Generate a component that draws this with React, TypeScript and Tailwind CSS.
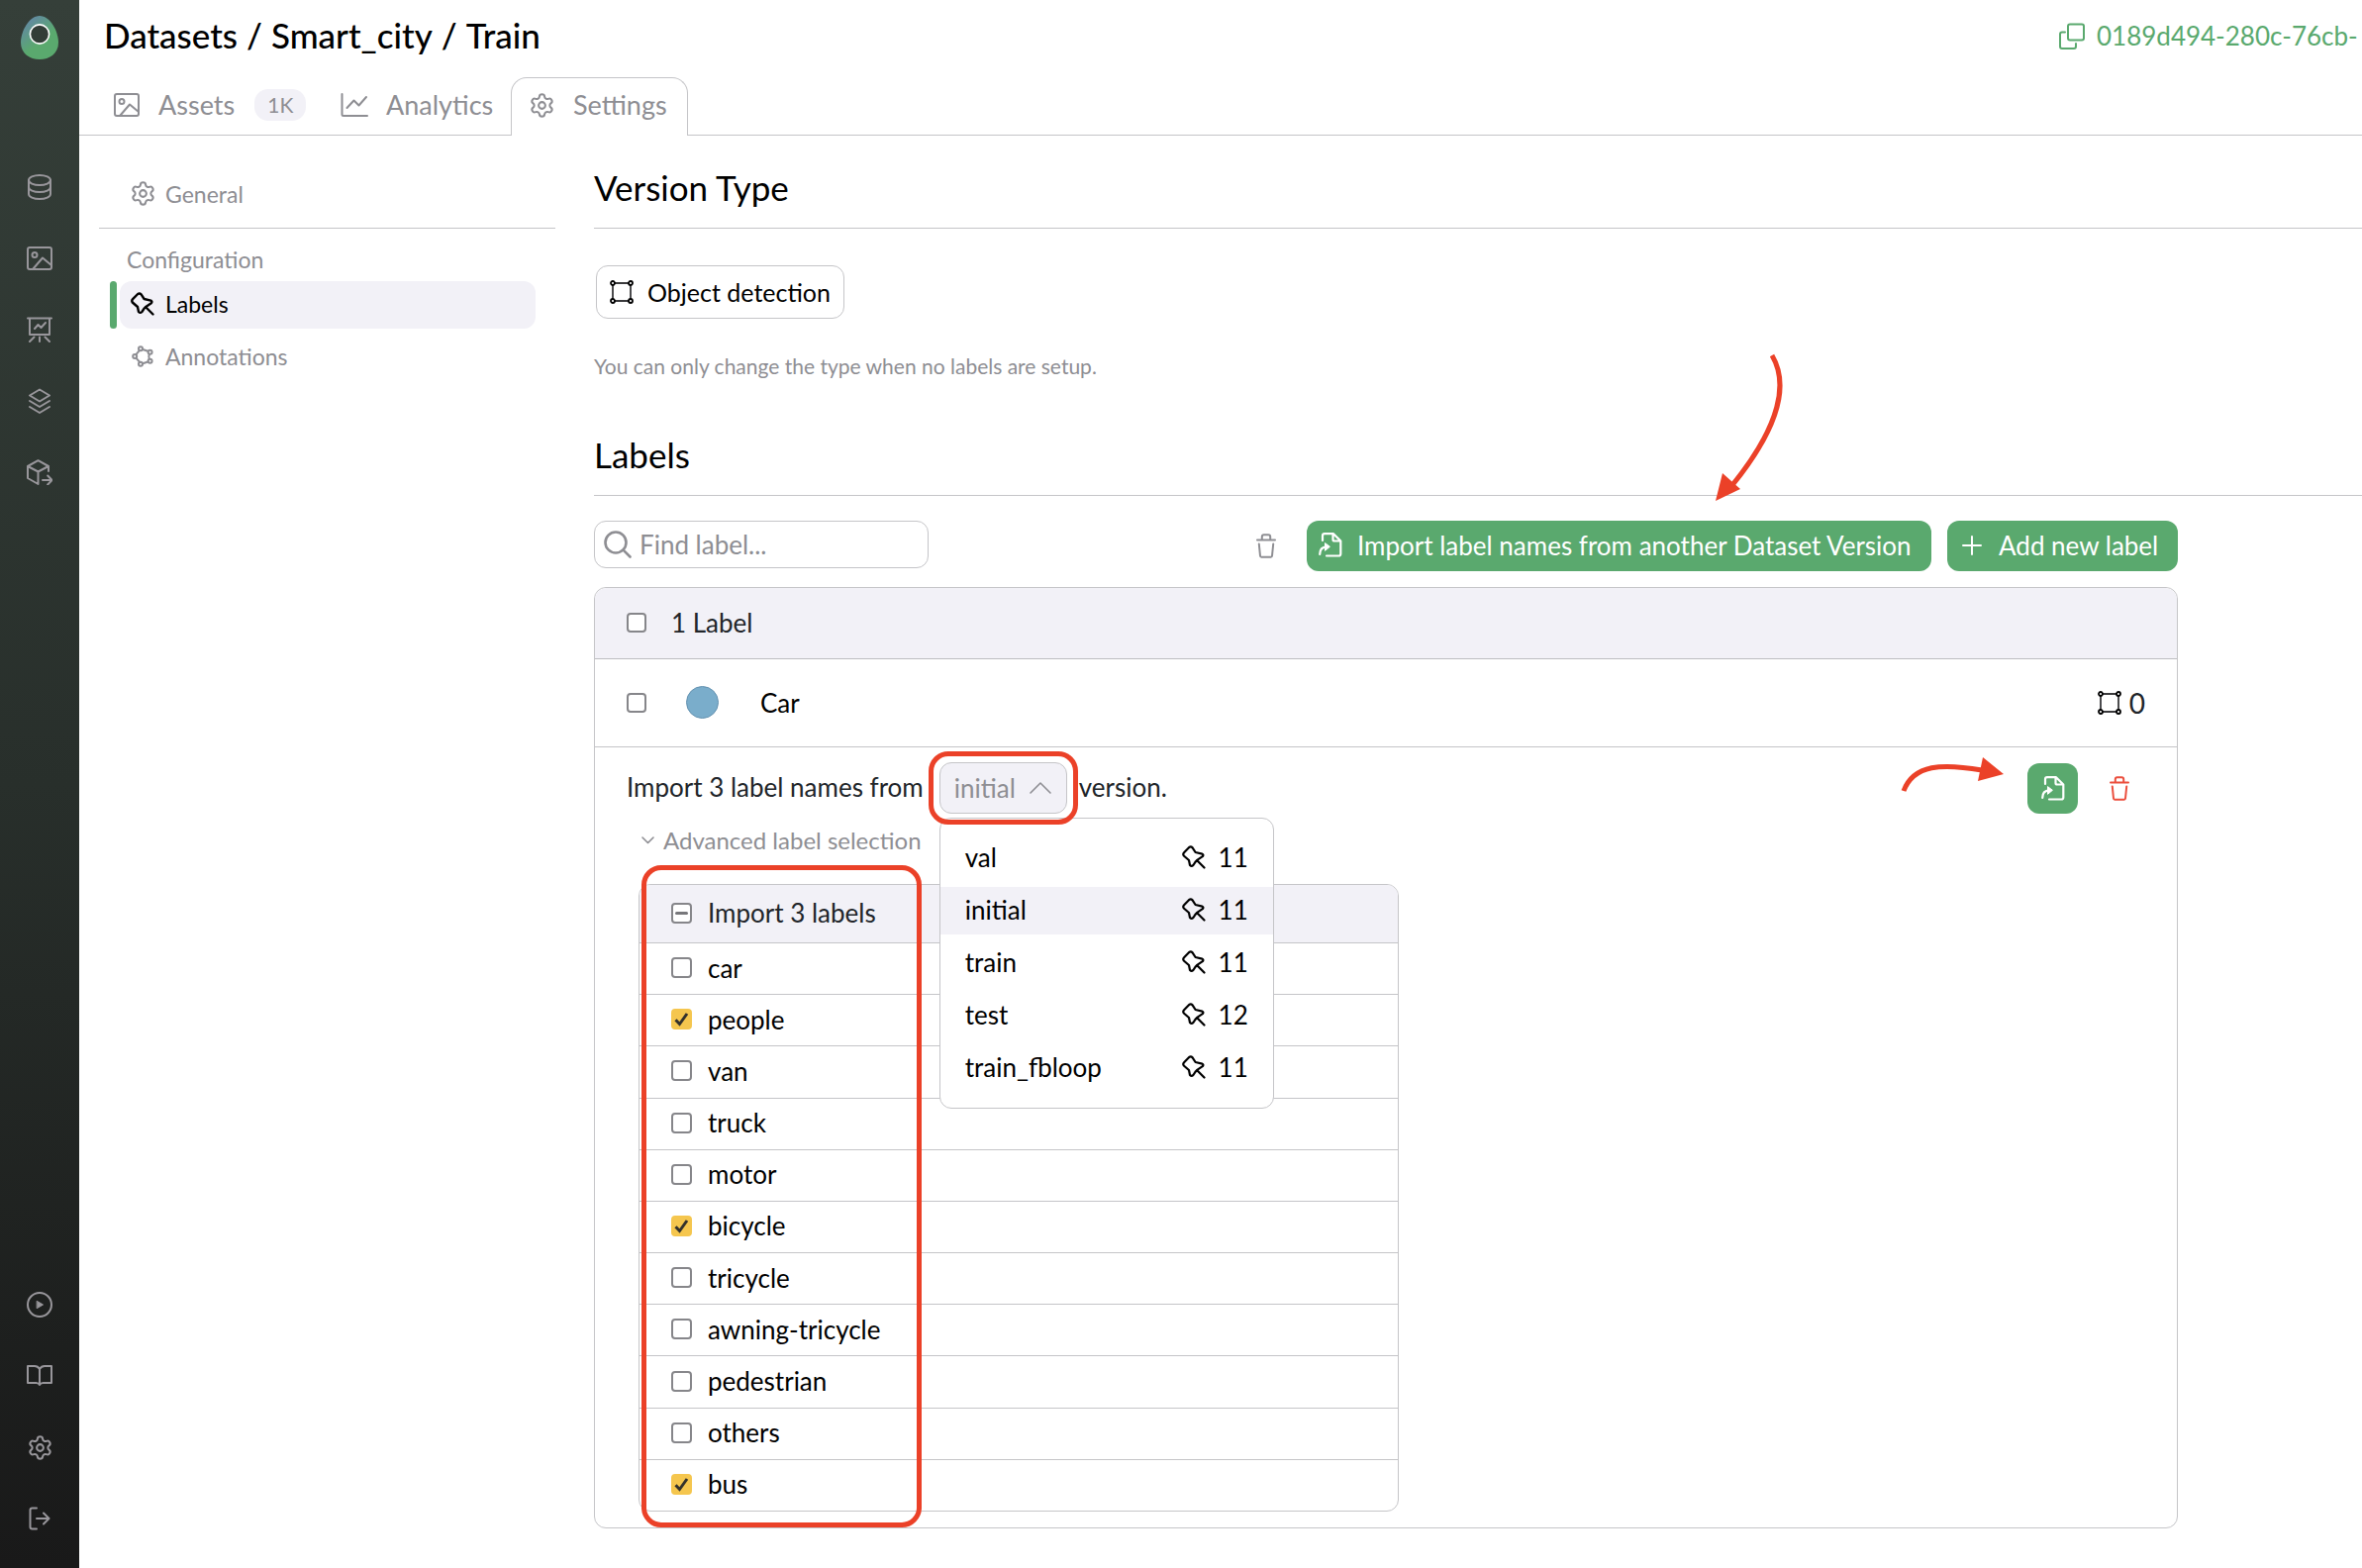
import React from 'react';
import { Settings } from 'lucide-react';

type IconProps = { w: number; h: number; stroke?: number; className?: string; children: React.ReactNode };

function Icon({ w, h, stroke = 2, className, children }: IconProps) {
  return (
    <svg
      width={w}
      height={h}
      viewBox={`0 0 ${w} ${h}`}
      fill="none"
      stroke="currentColor"
      strokeWidth={stroke}
      strokeLinecap="round"
      strokeLinejoin="round"
      className={'shrink-0 ' + (className ?? '')}
      aria-hidden="true"
    >
      {children}
    </svg>
  );
}

const Logo = () => (
  <svg width="38" height="44" viewBox="0 0 38 44" aria-hidden="true">
    <defs>
      <linearGradient id="egg" x1="0" y1="0" x2="0.7" y2="1">
        <stop offset="0.1" stopColor="#6386a8" />
        <stop offset="0.65" stopColor="#5aa96e" />
      </linearGradient>
    </defs>
    <path d="M19 0C30 0 38 16 38 27C38 38 29 44 19 44C9 44 0 38 0 27C0 16 8 0 19 0Z" fill="url(#egg)" />
    <circle cx="19" cy="18.5" r="9.6" fill="#323d37" stroke="#fff" strokeWidth="1.6" />
  </svg>
);

const DatabaseIcon = () => (
  <Icon w={24} h={26}>
    <ellipse cx="12" cy="6" rx="11" ry="5" />
    <path d="M1 6v14c0 2.8 4.9 5 11 5s11-2.2 11-5V6M1 13c0 2.8 4.9 5 11 5s11-2.2 11-5" />
  </Icon>
);
const ImageIcon = () => (
  <Icon w={26} h={24}>
    <rect x="1" y="1" width="24" height="22" rx="2" />
    <circle cx="8" cy="8.5" r="2.5" />
    <path d="M6.5 22.5L16 11.5l9 7.5" />
  </Icon>
);
const BoardIcon = () => (
  <Icon w={26} h={26}>
    <path d="M1 1.5h24M3 2v16h20V2M8 12l3.5-4 3 3L19 6M7.5 20.5l-4.5 4.5M13 20.5V25M18.5 20.5l4.5 4.5" />
  </Icon>
);
const LayersIcon = () => (
  <Icon w={22} h={26}>
    <path d="M11 1.5l10 6-10 6-10-6zM1 13l10 6 10-6M1 19l10 6 10-6" />
  </Icon>
);
const ModelIcon = () => (
  <Icon w={26} h={26}>
    <path d="M1 7l10.5-5.8L22 7v5M1 7v12l10.5 6V12.5zM11.5 12.5L22 7M16 21h9M21.2 16.5l4.3 4.5-4.3 4.5" />
  </Icon>
);
const PlayIcon = () => (
  <Icon w={26} h={26}>
    <circle cx="13" cy="13" r="12" />
    <path d="M10.5 9.5l6 3.500-6 3.500z" fill="currentColor" strokeWidth="1" />
  </Icon>
);
const BookIcon = () => (
  <Icon w={26} h={22}>
    <path d="M13 4c-1.2-2-3-3-5-3H1v17h8.500c1.500 0 2.700.6 3.500 2 .8-1.400 2-2 3.500-2H25V1h-7c-2 0-3.800 1-5 3zM13 4v16" />
  </Icon>
);
const LogoutIcon = () => (
  <Icon w={22} h={24}>
    <path d="M8 1.5H3.5q-2 0-2 2v17q0 2 2 2H8M8 12h12.5M15 6.5l5.5 5.5-5.5 5.5" />
  </Icon>
);
const CopyIcon = () => (
  <Icon w={26} h={27}>
    <rect x="9" y="1.5" width="16" height="16" rx="2" />
    <path d="M6 9.5H3q-2 0-2 2V24q0 2 2 2h12q2 0 2-2v-3" />
  </Icon>
);
const ChartIcon = () => (
  <Icon w={28} h={24}>
    <path d="M1.5 1v20.5q0 1.5 1.5 1.5h24M6.5 15l7-7.5 5 5L26 4" />
  </Icon>
);
const PinIcon = ({ stroke = 2.2 }: { stroke?: number }) => (
  <Icon w={24} h={24} stroke={stroke}>
    <path d="M7.2 2Q9 .8 10.6 2.4L13.6 7l6.800 1.600q1.800 1 .4 2.600L16 14.400l-2.400 2.200L11.400 20q-1.700 1.700-3.400 0l-1-5-5.200-4.500q-1.200-1.800.3-3.300zM15 15l7.500 7.500" />
  </Icon>
);
const NodesIcon = () => (
  <Icon w={22} h={22} stroke={2}>
    <circle cx="9" cy="3.2" r="2" />
    <circle cx="18.6" cy="6.8" r="2" />
    <circle cx="18.6" cy="15.8" r="2" />
    <circle cx="9" cy="18.8" r="2" />
    <circle cx="3.2" cy="11" r="2" />
    <path d="M11.2 4l5.200 1.800M17.800 9q-1 2.300 0 4.600M16.400 16.500l-5.200 1.700M8 16.700L4.600 12.800M4.400 9.200L7.800 5.200" />
  </Icon>
);
const BoxIcon = () => (
  <Icon w={24} h={24} stroke={1.8}>
    <path d="M5 3h14M5 21h14M3 5v14M21 5v14" stroke="#3a3a3c" />
    <circle cx="3" cy="3" r="2" />
    <circle cx="21" cy="3" r="2" />
    <circle cx="3" cy="21" r="2" />
    <circle cx="21" cy="21" r="2" />
  </Icon>
);
const ImportIcon = () => (
  <Icon w={24} h={25} stroke={2.2}>
    <path d="M4 8V3.200q0-2 2-2h9l7.300 7.300V21.500q0 2-2 2H8M14.500 1.500V7q0 1.500 1.500 1.500h6M1.200 22c0-5 2-7.500 7-7.700" />
    <path d="M6.800 10.800l4.600 3.500-4.600 3.800z" fill="currentColor" strokeWidth="1" />
  </Icon>
);
const TrashIcon = () => (
  <Icon w={20} h={25}>
    <path d="M5.800 6V3.200q0-2 2-2h4.400q2 0 2 2V6M1 6.500h18M2.800 10.500l1.200 12q.1 1.200 1.200 1.200h9.600q1.100 0 1.200-1.200l1.200-12" />
  </Icon>
);
const SearchIcon = () => (
  <Icon w={28} h={28} stroke={2.6}>
    <circle cx="12" cy="12" r="10.5" />
    <path d="M19.600 19.600L26.500 26.500" />
  </Icon>
);

function CheckBox({ label, checked, partial, size = 'list' }: { label: string; checked?: boolean; partial?: boolean; size?: 'list' | 'outer' }) {
  return (
    <span className={'grid shrink-0 ' + (size === 'outer' ? 'size-5' : 'size-[21px]')}>
      <input
        type="checkbox"
        aria-label={label}
        defaultChecked={checked}
        ref={(el) => {
          if (el && partial) el.indeterminate = true;
        }}
        className="peer col-start-1 row-start-1 size-full appearance-none rounded border-2 border-[#86868a] bg-white checked:border-[#f5c64e] checked:bg-[#f5c64e]"
      />
      <svg viewBox="0 0 21 21" className="pointer-events-none col-start-1 row-start-1 hidden size-full peer-checked:block" aria-hidden="true">
        <path d="M4.500 11.200l4 4.300 7.500-10.500" fill="none" stroke="#33312c" strokeWidth="3" />
      </svg>
      {partial && (
        <svg viewBox="0 0 21 21" className="pointer-events-none col-start-1 row-start-1 size-full" aria-hidden="true">
          <path d="M5.500 10.500h10" fill="none" stroke="#77777b" strokeWidth="3" strokeLinecap="round" />
        </svg>
      )}
    </span>
  );
}

const topNav = [
  { name: 'Datasets', icon: <DatabaseIcon /> },
  { name: 'Assets', icon: <ImageIcon /> },
  { name: 'Analytics', icon: <BoardIcon /> },
  { name: 'Stacks', icon: <LayersIcon /> },
  { name: 'Models', icon: <ModelIcon /> },
];
const bottomNav = [
  { name: 'Tutorials', icon: <PlayIcon /> },
  { name: 'Documentation', icon: <BookIcon /> },
  { name: 'Preferences', icon: <Settings size={27} strokeWidth={1.8} /> },
  { name: 'Log out', icon: <LogoutIcon /> },
];
const versions = [
  { name: 'val', count: 11 },
  { name: 'initial', count: 11 },
  { name: 'train', count: 11 },
  { name: 'test', count: 12 },
  { name: 'train_fbloop', count: 11 },
];
const labels = ['car', 'people', 'van', 'truck', 'motor', 'bicycle', 'tricycle', 'awning-tricycle', 'pedestrian', 'others', 'bus'];
const picked = ['people', 'bicycle', 'bus'];

function RailGroup({ items }: { items: { name: string; icon: React.ReactNode }[] }) {
  return (
    <div className="flex flex-col items-center gap-6">
      {items.map((i) => (
        <a key={i.name} href="#" aria-label={i.name} className="flex size-12 items-center justify-center">
          {i.icon}
        </a>
      ))}
    </div>
  );
}

function SideMenu() {
  return (
    <nav aria-label="Version settings" className="pr-[39px] pl-5 text-[23px] text-[#8e8e93]">
      <div className="flex h-[94px] items-center border-b border-[#c5c5c8] pt-6 pl-[31px]">
        <a href="#" className="flex items-center gap-[9px]">
          <Settings size={27} strokeWidth={1.8} />
          General
        </a>
      </div>
      <h3 className="flex h-[53px] items-center pt-2 pl-7">Configuration</h3>
      <div className="flex h-12 gap-[3px] pr-5 pl-[11px]">
        <span className="w-[7px] rounded bg-[#5aa96e]" />
        <a href="#" className="flex flex-1 items-center gap-[11px] rounded-xl bg-[#f2f1f7] pb-0.5 pl-[11px] text-black">
          <PinIcon stroke={2.4} />
          Labels
        </a>
      </div>
      <a href="#" className="mt-[5px] flex h-12 items-center gap-3 pb-0.5 pl-[33px]">
        <NodesIcon />
        Annotations
      </a>
    </nav>
  );
}

function VersionPicker() {
  return (
    <div className="relative z-20 mr-3 ml-4">
      <button
        type="button"
        aria-haspopup="listbox"
        aria-expanded="true"
        className="flex h-[52px] w-[129px] items-center justify-between rounded-xl border border-[#c5c5c8] bg-[#f2f1f7] pr-[15px] pl-3.5 text-[#8e8e93]"
      >
        initial
        <Icon w={22} h={12} stroke={1.6}>
          <path d="M1 11L11 1l10 10" />
        </Icon>
      </button>
      <ul role="listbox" aria-label="Version" className="absolute top-14 left-0 flex w-[338px] flex-col gap-[5px] rounded-xl border border-[#c5c5c8] bg-white py-4 text-black">
        {versions.map((v) => (
          <li
            key={v.name}
            role="option"
            aria-selected={v.name === 'initial'}
            className={'flex h-12 items-center px-[25px] pb-0.5 ' + (v.name === 'initial' ? 'bg-[#f2f1f7]' : '')}
          >
            <span className="flex-1">{v.name}</span>
            <PinIcon />
            <span className="ml-[13px]">{v.count}</span>
          </li>
        ))}
      </ul>
      <span className="pointer-events-none absolute -inset-[11px] rounded-[20px] border-[5px] border-[#eb4128]" />
    </div>
  );
}

function LabelList() {
  return (
    <div className="relative mt-[25px] mr-8 ml-3 max-w-[768px]">
      <div className="overflow-hidden rounded-xl border border-[#c5c5c8]">
        <div className="flex h-[58px] items-center gap-4 bg-[#f2f1f7] pb-0.5 pl-8">
          <CheckBox label="All labels" partial />
          <span>Import 3 labels</span>
        </div>
        <ul className="grid h-[574px] auto-rows-fr text-black">
          {labels.map((l) => (
            <li key={l} className="flex items-center gap-4 border-t border-[#c5c5c8] pb-0.5 pl-8">
              <CheckBox label={l} checked={picked.includes(l)} />
              <span>{l}</span>
            </li>
          ))}
        </ul>
      </div>
      <span className="pointer-events-none absolute -top-[19px] -bottom-4 left-[3px] w-[283px] rounded-[20px] border-[5px] border-[#eb4128]" />
    </div>
  );
}

export default function App() {
  return (
    <div className="flex min-h-screen overflow-hidden bg-white font-['Lato',sans-serif] text-[26px] leading-8 text-[#212529]">
      <aside className="flex w-20 shrink-0 flex-col items-center justify-between bg-linear-to-b from-[#353f39] via-[#282f2b] to-[#191919] pt-4 pb-[26px] text-[#98969b]">
        <div className="flex flex-col items-center gap-[105px]">
          <a href="#" aria-label="Home">
            <Logo />
          </a>
          <RailGroup items={topNav} />
        </div>
        <RailGroup items={bottomNav} />
      </aside>

      <div className="min-w-0 flex-1">
        <header className="border-b border-[#c5c5c8]">
          <div className="flex h-[72px] items-center justify-between pl-[25px]">
            <h1 className="flex gap-[9px] pb-0.5 text-[35px] font-medium text-black">
              <span>Datasets</span>
              <span>/</span>
              <span>Smart_city</span>
              <span>/</span>
              <span>Train</span>
            </h1>
            <button type="button" className="flex w-[306px] items-center gap-3 whitespace-nowrap text-[#5aa96e]">
              <CopyIcon />
              0189d494-280c-76cb-
            </button>
          </div>
          <nav aria-label="Dataset version" className="-mb-px flex h-[65px] items-end pl-5 text-[27px] text-[#8e8e93]">
            <a href="#" className="flex h-[59px] w-[229px] items-center pb-1 pl-[15px]">
              <ImageIcon />
              <span className="ml-[19px]">Assets</span>
              <span className="ml-5 rounded-[14px] bg-[#f2f1f7] px-[13px] text-[21px]">1K</span>
            </a>
            <a href="#" className="flex h-[59px] w-[187px] items-center pb-1 pl-[15px]">
              <ChartIcon />
              <span className="ml-[18px]">Analytics</span>
            </a>
            <a href="#" aria-current="page" className="flex h-[59px] w-[179px] items-center rounded-t-2xl border border-b-0 border-[#c5c5c8] bg-white pb-1 pl-[17px]">
              <Settings size={27} strokeWidth={1.8} />
              <span className="ml-[18px]">Settings</span>
            </a>
          </nav>
        </header>

        <div className="grid grid-cols-[520px_minmax(0,1fr)]">
          <SideMenu />

          <main>
            <h2 className="flex h-[94px] items-center border-b border-[#c5c5c8] pt-[11px] text-[35px] text-black">Version Type</h2>
            <button type="button" className="mt-[37px] ml-0.5 flex h-[54px] items-center gap-3.5 rounded-xl border border-[#c5c5c8] px-[13px] text-[25px] text-black">
              <BoxIcon />
              Object detection
            </button>
            <p className="mt-8 text-[21px] text-[#8e8e93]">You can only change the type when no labels are setup.</p>
            <h2 className="mt-[21px] flex h-[94px] items-center border-b border-[#c5c5c8] pt-[11px] text-[35px] text-black">Labels</h2>

            <div className="mr-[186px] max-w-[1600px]">
              <div className="mt-[25px] flex items-center">
                <label className="mr-auto flex h-12 w-[338px] items-center gap-2 self-start rounded-xl border border-[#c5c5c8] pr-3 pl-[9px] text-[#8e8e93]">
                  <SearchIcon />
                  <input type="search" aria-label="Find label" placeholder="Find label..." className="w-full min-w-0 bg-transparent outline-none placeholder:text-[#8e8e93]" />
                </label>
                <button type="button" aria-label="Delete selected labels" className="mr-[31px] text-[#8e8e93]">
                  <TrashIcon />
                </button>
                <div className="relative mr-4">
                  <button type="button" className="flex h-[51px] w-[631px] items-center gap-[15px] rounded-xl bg-[#5aa96e] pb-0.5 pl-3 whitespace-nowrap text-white">
                    <ImportIcon />
                    Import label names from another Dataset Version
                  </button>
                  <svg width="72" height="152" viewBox="0 0 72 152" className="pointer-events-none absolute -top-[170px] right-[149px]" aria-hidden="true">
                    <path d="M60 3C76 30 70 72 20 134" fill="none" stroke="#eb4128" strokeWidth="5" />
                    <path d="M3 150L10 122L28 138Z" fill="#eb4128" />
                  </svg>
                </div>
                <button type="button" className="flex h-[51px] w-[233px] items-center gap-[17px] rounded-xl bg-[#5aa96e] pb-0.5 pl-[15px] whitespace-nowrap text-white">
                  <Icon w={20} h={20}>
                    <path d="M10 1v18M1 10h18" />
                  </Icon>
                  Add new label
                </button>
              </div>

              <section aria-label="Labels" className="mt-4 rounded-xl border border-[#c5c5c8]">
                <div className="flex h-[72px] items-center gap-[25px] rounded-t-xl border-b border-[#bdbdc1] bg-[#f2f1f7] pb-0.5 pl-8">
                  <CheckBox label="Select all" size="outer" />
                  <span>1 Label</span>
                </div>
                <div className="flex h-[89px] items-center border-b border-[#c5c5c8] px-8 pb-px text-black">
                  <CheckBox label="Select Car" size="outer" />
                  <span className="ml-10 size-[33px] rounded-full border border-[#6391b0] bg-[#7aadcb]" />
                  <span className="mr-auto ml-[42px]">Car</span>
                  <BoxIcon />
                  <span className="ml-2 text-[28px] text-[#212529]">0</span>
                </div>
                <div className="pt-[15px] pb-4 pl-8">
                  <div className="flex h-[52px] items-center">
                    <span className="pb-0.5">Import 3 label names from</span>
                    <VersionPicker />
                    <span className="pb-0.5">version.</span>
                    <div className="relative mr-8 ml-auto">
                      <button type="button" aria-label="Import labels" className="flex size-[51px] items-center justify-center rounded-xl bg-[#5aa96e] text-white">
                        <ImportIcon />
                      </button>
                      <svg width="106" height="38" viewBox="0 0 106 38" className="pointer-events-none absolute -top-[7px] right-[73px]" aria-hidden="true">
                        <path d="M3 35C13 8 42 7 82 14" fill="none" stroke="#eb4128" strokeWidth="5" />
                        <path d="M104 18L83 1L78 25Z" fill="#eb4128" />
                      </svg>
                    </div>
                    <button type="button" aria-label="Discard import" className="mr-12 text-[#eb4e3d]">
                      <TrashIcon />
                    </button>
                  </div>
                  <button type="button" aria-expanded="true" className="mt-2.5 ml-[15px] flex h-9 items-center gap-[9px] pb-0.5 text-[24px] text-[#8e8e93]">
                    <Icon w={13} h={8} stroke={1.6}>
                      <path d="M1 1l5.500 5.500L12 1" />
                    </Icon>
                    Advanced label selection
                  </button>
                  <LabelList />
                </div>
              </section>
            </div>
          </main>
        </div>
      </div>
    </div>
  );
}
